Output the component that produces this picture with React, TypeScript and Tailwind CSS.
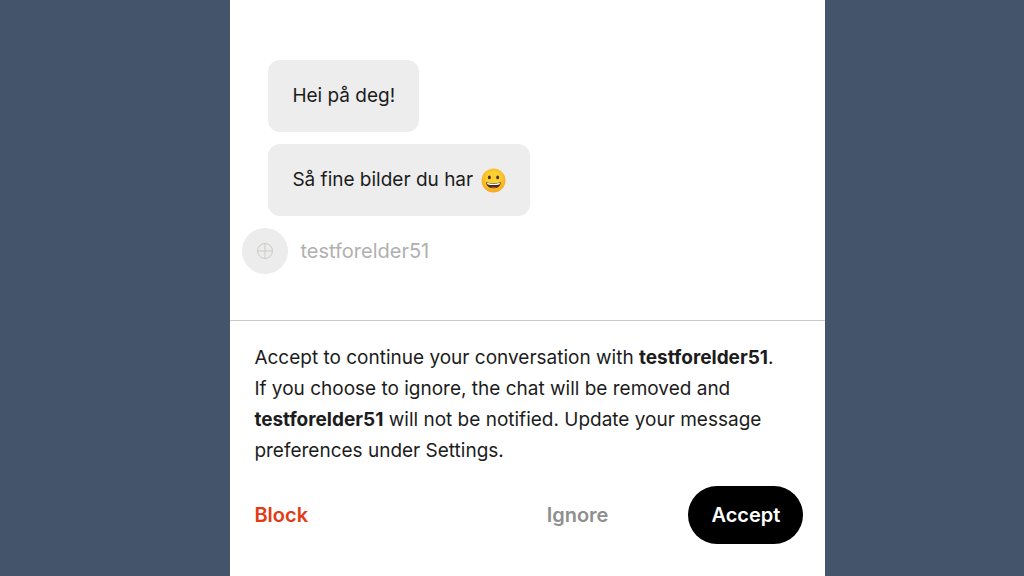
const messages = ['Hei på deg!', 'Så fine bilder du har'];

function Smiley() {
  return (
    <svg viewBox="0 0 24 24" className="ml-2 inline-block h-[25px] w-[25px] shrink-0" role="img" aria-label="grinning face">
      <defs>
        <radialGradient id="face" cx="50%" cy="40%" r="60%">
          <stop offset="0.4" stopColor="#fdd032" />
          <stop offset="1" stopColor="#f3a920" />
        </radialGradient>
      </defs>
      <circle cx="12" cy="12" r="11.5" fill="url(#face)" />
      <ellipse cx="8" cy="9" rx="1.4" ry="1.8" fill="#4a342a" />
      <ellipse cx="16" cy="9" rx="1.4" ry="1.8" fill="#4a342a" />
      <path d="M4.8 13.6Q12 15.6 19.2 13.6Q18.4 19.4 12 19.4Q5.6 19.4 4.8 13.6Z" fill="#4a2c20" />
      <path d="M5.6 14.2Q12 16 18.4 14.2L17.6 15.8Q12 17 6.4 15.8Z" fill="#fff" />
      <path d="M9 18.6Q12 17.2 15 18.6Q12 19.6 9 18.6Z" fill="#c9472f" />
    </svg>
  );
}

export default function App() {
  return (
    <div className="min-h-screen bg-[#44546a] pr-[19.4%] pl-[22.5%] font-['Inter','Liberation_Sans',sans-serif] text-[19px] text-[#1c1c1c]">
      <div className="flex min-h-screen flex-col bg-white">
        <main className="flex flex-1 flex-col items-start pt-[60px]">
          {messages.map((message, i) => (
            <div key={message} className="mb-3 ml-[38px] flex h-[72px] items-center rounded-xl bg-[#ededed] px-6">
              {message}
              {i === 1 && <Smiley />}
            </div>
          ))}
          <div className="ml-3 flex items-center gap-3 text-xl text-[#b0b0b0]">
            <span className="flex h-[46px] w-[46px] items-center justify-center rounded-full bg-[#ececec]">
              <svg viewBox="0 0 18 18" className="h-[18px] w-[18px]" fill="none" stroke="#cccbc7">
                <circle cx="9" cy="9" r="7.5" />
                <path d="M9 1.5v15M1.5 9h15" />
              </svg>
            </span>
            testforelder51
          </div>
        </main>
        <footer className="border-t border-[#c9c9c9] px-6 pt-[21px] pb-8">
          <p className="leading-[31px]">
            Accept to continue your conversation with <b>testforelder51</b>.<br />
            If you choose to ignore, the chat will be removed and<br />
            <b>testforelder51</b> will not be notified. Update your message<br />
            preferences under Settings.
          </p>
          <div className="-mr-0.5 mt-5 flex items-center text-xl font-semibold">
            <button type="button" className="text-[#e23a12]">Block</button>
            <button type="button" className="ml-auto text-[#8f8f8f]">Ignore</button>
            <button type="button" className="ml-20 h-[58px] rounded-full bg-black px-[23px] text-white">Accept</button>
          </div>
        </footer>
      </div>
    </div>
  );
}
